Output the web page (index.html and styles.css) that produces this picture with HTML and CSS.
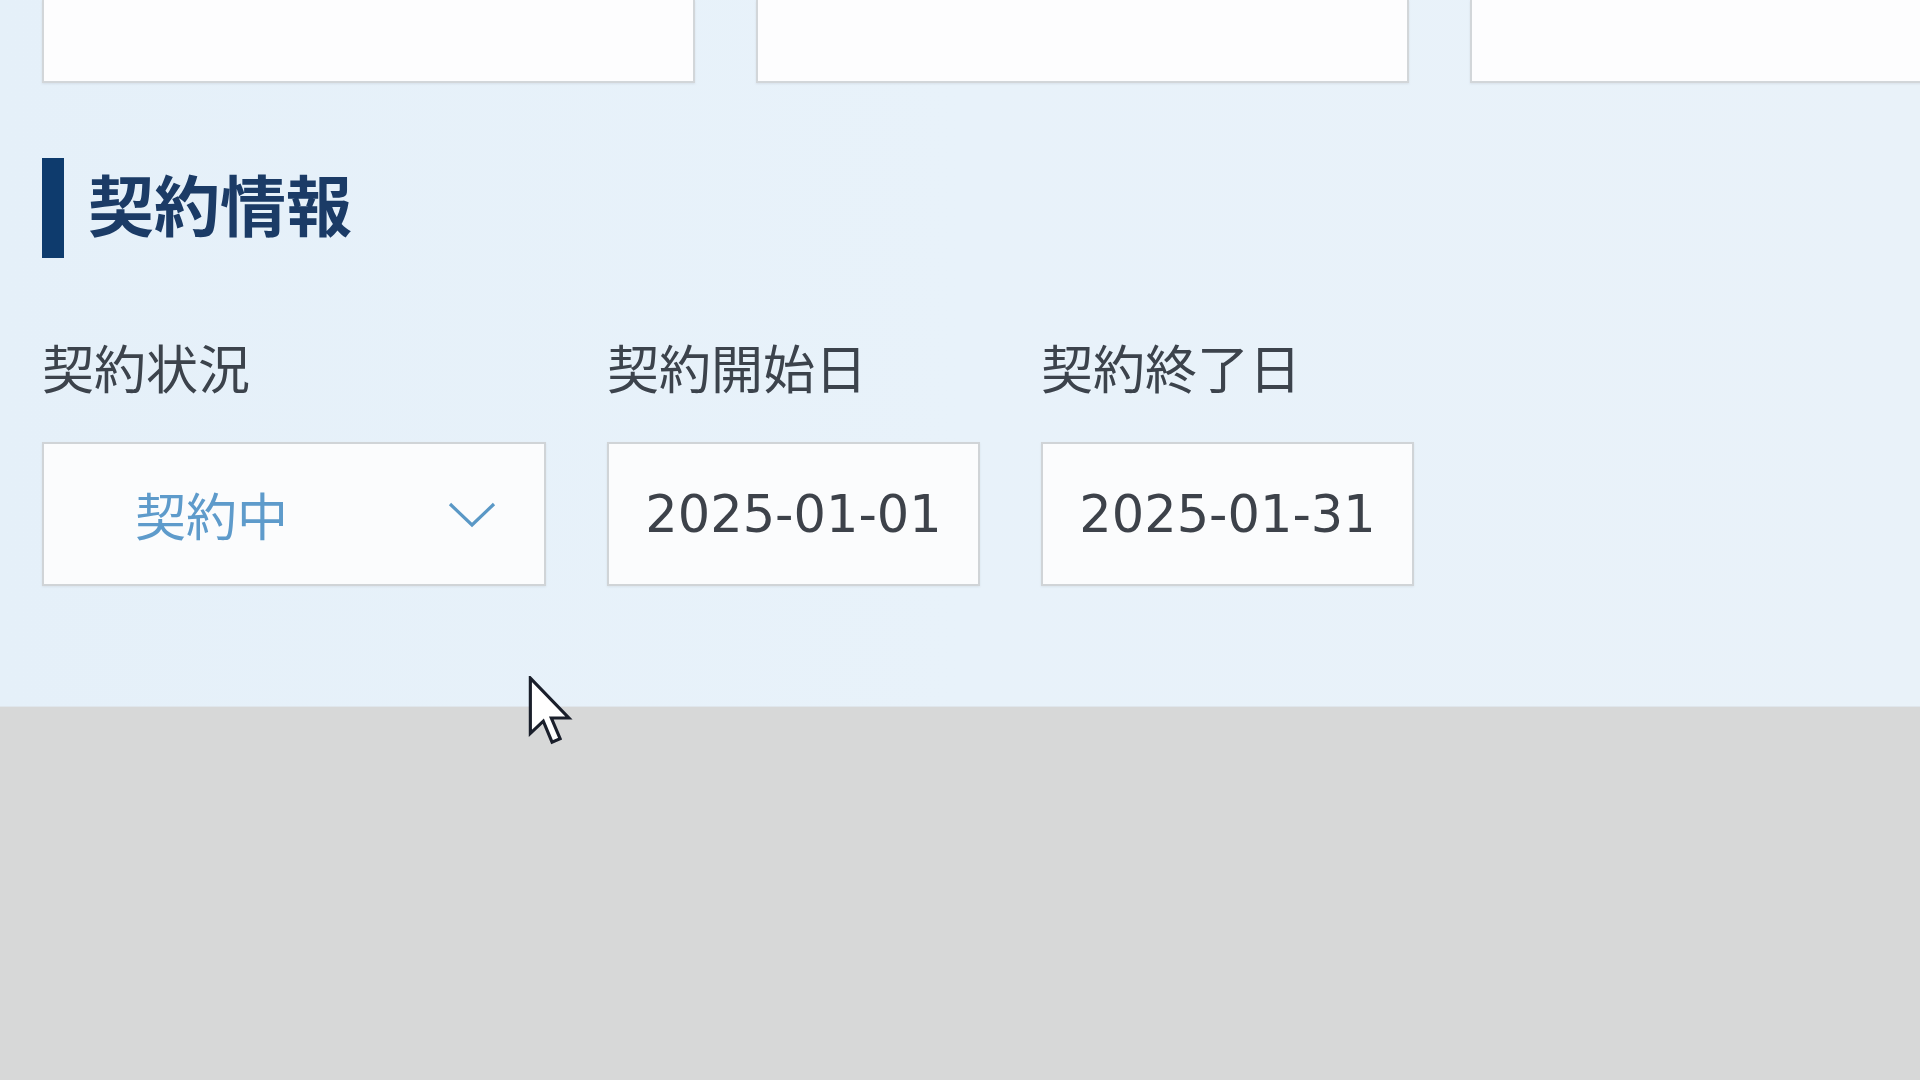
FILE: index.html
```html
<!DOCTYPE html>
<html lang="ja">
<head>
<meta charset="utf-8">
<title>契約情報</title>
<link rel="stylesheet" href="styles.css">
</head>
<body>
<div class="page">
  <section class="panel">
    <div class="cards">
      <div class="card"></div>
      <div class="card"></div>
      <div class="card"></div>
    </div>
    <h2 class="section-title"><span class="title-bar"></span><span class="title-text">契約情報</span></h2>
    <div class="fields">
      <div class="field field-status">
        <div class="field-label">契約状況</div>
        <div class="select-box">
          <span class="select-value">契約中</span>
          <svg class="chevron" width="48" height="26" viewBox="0 0 48 26"><polyline points="2,2 24,23 46,2" fill="none" stroke="#5a98c6" stroke-width="3.2"/></svg>
        </div>
      </div>
      <div class="field field-date">
        <div class="field-label">契約開始日</div>
        <div class="date-box">2025-01-01</div>
      </div>
      <div class="field field-date">
        <div class="field-label">契約終了日</div>
        <div class="date-box">2025-01-31</div>
      </div>
    </div>
  </section>
  <div class="below"></div>
  <svg class="cursor" width="46" height="70" viewBox="0 0 13 20"><path d="M0.6,0.6 L0.6,16.4 L4.3,12.9 L6.8,18.9 L9.1,17.9 L6.6,12 L11.6,12 Z" fill="#ffffff" stroke="#1a1f2b" stroke-width="0.9" stroke-linejoin="miter"/></svg>
</div>
</body>
</html>
```
FILE: styles.css
```css
html, body {
  margin: 0;
  padding: 0;
}
body {
  width: 1920px;
  height: 1080px;
  overflow: hidden;
  font-family: "Noto Sans CJK JP", "Noto Sans", sans-serif;
  background: #d7d8d8;
}
.page {
  position: relative;
  width: 1920px;
  height: 1080px;
  display: flex;
  flex-direction: column;
  overflow: hidden;
}
.panel {
  height: 707px;
  box-sizing: border-box;
  padding: 0 0 0 42px;
  background: linear-gradient(90deg, #e5f0f9 0%, #e8f2fa 50%, #e9f2f9 100%);
  border-bottom: 1px solid #dfe6ec;
  overflow: hidden;
}
.cards {
  display: grid;
  grid-template-columns: repeat(3, 653px);
  column-gap: 61px;
  height: 83px;
}
.card {
  background: #fdfdfe;
  border: 2px solid #d2d6d9;
  border-top: none;
  box-shadow: 0 1px 2px rgba(120, 130, 140, 0.15);
}
.section-title {
  margin: 75px 0 0 0;
  height: 100px;
  display: flex;
  align-items: center;
  gap: 24px;
  font-weight: 700;
}
.title-bar {
  width: 22px;
  height: 100px;
  background: #0e3b6d;
}
.title-text {
  font-size: 66px;
  line-height: 80px;
  color: #1b3b66;
  margin-top: -12px;
}
.fields {
  display: flex;
  gap: 61px;
  margin-top: 75px;
}
.field-label {
  font-size: 52px;
  line-height: 60px;
  color: #3c434c;
  height: 60px;
  padding-top: 4px;
  margin-bottom: 45px;
  white-space: nowrap;
}
.field-status {
  width: 504px;
}
.field-date {
  width: 373px;
}
.select-box,
.date-box {
  box-sizing: border-box;
  height: 144px;
  border: 2px solid #d0d4d7;
  background: #fbfcfd;
  box-shadow: 0 1px 2px rgba(120, 130, 140, 0.12);
}
.select-box {
  display: flex;
  align-items: center;
  justify-content: space-between;
  padding: 0 48px 0 91px;
}
.select-value {
  font-size: 51px;
  color: #5e9bcb;
  line-height: 60px;
}
.chevron {
  display: block;
  margin-top: 2px;
}
.date-box {
  display: flex;
  align-items: center;
  justify-content: center;
  font-family: "DejaVu Sans", "Noto Sans", sans-serif;
  font-size: 51px;
  color: #3d424a;
}
.below {
  flex: 1;
  background: #d7d8d8;
}
.cursor {
  position: absolute;
  left: 528px;
  top: 676px;
}
```
